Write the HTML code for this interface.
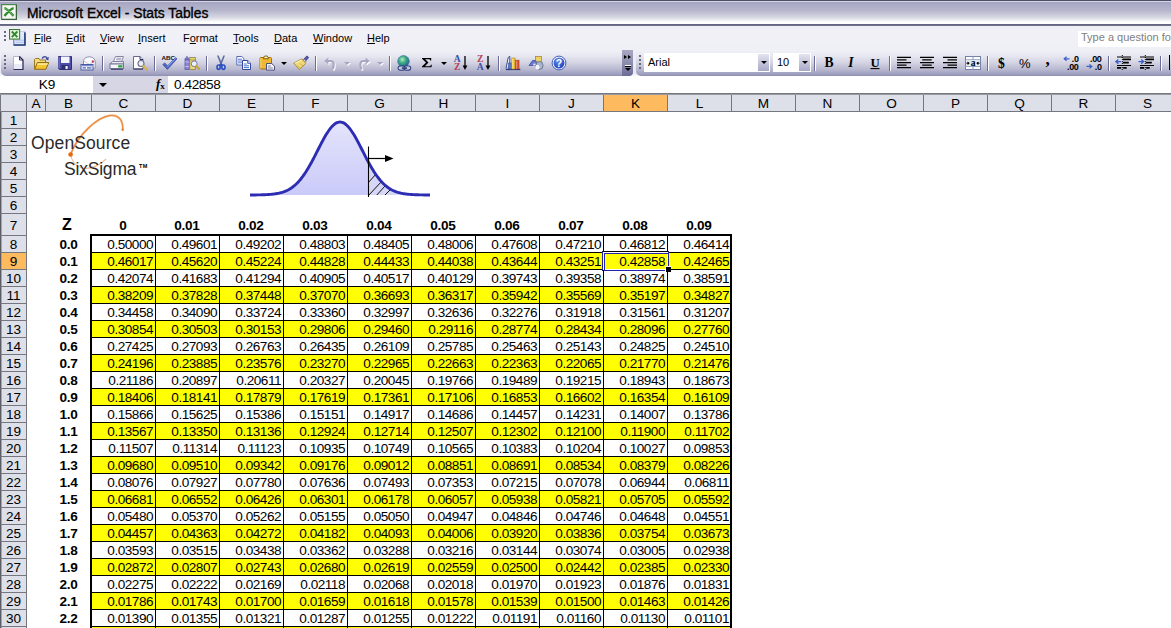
<!DOCTYPE html><html><head><meta charset="utf-8"><title>Microsoft Excel - Stats Tables</title><style>*{box-sizing:border-box;margin:0;padding:0}
html,body{width:1171px;height:628px;overflow:hidden;background:#fff;font-family:"Liberation Sans",sans-serif;font-size:13px;color:#000}
body{position:relative}
div{position:absolute}
#title{left:0;top:0;width:1171px;height:26px;background:linear-gradient(#4e4e68 0,#4e4e68 1px,#d4d4e4 1px,#d4d4e4 2px,#a6a6c2 2.5px,#aeaec8 6px,#b4b4cc 10px,#c6c6d8 14px,#dcdce6 18px,#f4f4f7 21px,#ffffff 22px,#ffffff 24px,#8a8aa4 24px,#5e5e7a 24.6px,#62627e 25.4px,#b8b8cc 26px)}
#title .txt{left:27px;top:4px;font-size:13.85px;line-height:18px;white-space:nowrap;color:#000;-webkit-text-stroke:0.35px #000}
#menu{left:0;top:26px;width:1171px;height:24px;background:linear-gradient(#ededf4,#f1f1f7 25%,#efeff6)}
#menu span{position:absolute;top:5px;font-size:11px;line-height:15px;white-space:nowrap}
#menu u{text-decoration:underline;text-underline-offset:1px}
#tb1{left:1px;top:50px;width:632px;height:26px;background:linear-gradient(#f1f1f7,#e6e6f0 25%,#d2d2e2 50%,#b8b8d0 75%,#a0a0c0 92%,#8e8eb2);border-radius:0 0 5px 5px}
#tb2{left:636px;top:50px;width:540px;height:26px;background:linear-gradient(#f1f1f7,#e6e6f0 25%,#d2d2e2 50%,#b8b8d0 75%,#a0a0c0 92%,#8e8eb2);border-radius:0 0 0 5px}
#tbgap{left:0;top:50px;width:1171px;height:27px;background:linear-gradient(#efeff6,#e8e8f1 85%,#fff)}
#fbar{left:0;top:76px;width:1171px;height:17px;background:#fff}
#fbar .mid{left:93px;top:0;width:75px;height:17px;background:#d6d6e4}
#fbar .nb{left:0;top:0;width:93px;height:17px;text-align:center;font-size:13.6px;line-height:17px;padding-left:1px}
#fbar .val{left:174px;top:0;font-size:13.6px;line-height:17px;letter-spacing:-0.4px}
#colhdr{left:0;top:93px;width:1171px;height:19px;background:#dddfe9;border-top:1px solid #76767e;border-bottom:1px solid #76767e}
#colhdr .ch{top:0;height:17px;border-right:1px solid #76767e;text-align:center;font-size:13.6px;line-height:20px}
#colhdr .corner{left:0;top:0;width:27px;height:17px;border-right:1px solid #76767e;border-left:1px solid #76767e}
#colhdr .sel{background:#fdba5e}
#rowhdr{left:0;top:0;width:27px;height:628px}
#rowhdr .rh{left:0;width:27px;background:#dddfe9;border-right:1px solid #76767e;border-bottom:1px solid #76767e;border-left:1px solid #5c5c64;text-align:center;font-size:13.6px;overflow:hidden;padding-left:0;box-shadow:inset 1px 0 0 #a4a4ac}
#rowhdr .sel{background:#fdba5e}
#sheet{left:0;top:0;width:1171px;height:628px;pointer-events:none}
.zh{text-align:center;font-weight:bold;font-size:16px;line-height:24px;padding-right:2px}
.hh{text-align:center;font-weight:bold;font-size:13.6px;line-height:26px;letter-spacing:-0.3px}
.zl{text-align:center;font-weight:bold;font-size:13.6px;line-height:20px;height:17px;letter-spacing:-0.3px;padding-left:1px}
.v{width:64px;height:17px;text-align:right;padding-right:2px;font-size:13.6px;line-height:19px;letter-spacing:-0.5px}
.yrow{left:92px;width:638px;height:16px;background:#ffff00}
.hl{left:92px;width:638px;height:1px;background:#000}
.vl{top:236px;width:1px;height:392px;background:#000;margin-left:0}
.tb-top{left:90px;top:234px;width:642px;height:2px;background:#000}
.tb-left{left:90px;top:234px;width:2px;height:394px;background:#000}
.tb-right{left:730px;top:234px;width:2px;height:394px;background:#000}

.grip3{left:4px;top:5px;width:2px;height:10px;background:repeating-linear-gradient(#686880 0,#686880 2px,transparent 2px,transparent 4px)}
.grip4{left:3px;top:5px;width:2px;height:14px;background:repeating-linear-gradient(#686880 0,#686880 2px,transparent 2px,transparent 4px)}
.grip4:after,.grip3:after{content:"";position:absolute;left:1px;top:1px;width:2px;height:100%;background:repeating-linear-gradient(#fff 0,#fff 2px,transparent 2px,transparent 4px);z-index:-1}
.sep{top:6px;width:2px;height:15px;border-left:1px solid #6c6c98;background:#fff}
.arr{top:12px;width:0;height:0;border-left:3px solid transparent;border-right:3px solid transparent;border-top:3px solid #000}
.ovf{left:621px;top:0;width:11px;height:25px;background:linear-gradient(#a8a8c2,#8c8cae 50%,#6c6c98);border-radius:0 0 4px 0;height:26px}
.ask{left:1078px;top:5px;width:100px;height:16px;background:#fff;color:#808080;font-size:11px;line-height:13px;padding-left:3px;white-space:nowrap;overflow:hidden}
.combo{top:3px;height:19px;background:#fff;border:1px solid #fff}
.combo span{position:absolute;left:3px;top:1px;font-size:11px;line-height:15px}
.combo b{position:absolute;right:0;top:0;width:11px;height:17px;background:linear-gradient(#e4e4f0,#a8a8c8)}
.combo b:after{content:"";position:absolute;left:3px;top:7px;border-left:3px solid transparent;border-right:3px solid transparent;border-top:3px solid #000}
#fbar .dd{position:absolute;left:6px;top:7px;border-left:4px solid transparent;border-right:4px solid transparent;border-top:4px solid #000}
#fbar .fx{position:absolute;left:63px;top:0;font-family:"Liberation Serif",serif;font-size:13px;line-height:16px;font-weight:bold;font-style:italic}
#fbar .fx small{font-size:9px;font-style:normal;position:relative;top:1px;left:0}

.lg{font-size:17.5px;line-height:22px;white-space:nowrap;color:#2a2a2a;letter-spacing:-0.2px}
.tm{font-size:5.5px;font-weight:bold;line-height:8px;letter-spacing:.3px}

.selbox{left:602px;top:251px;width:67px;height:20px;border:1px solid;border-color:#000 #2424a8 #000 #2424a8}
.selbox .s1{left:0;top:0;width:65px;height:18px;border:1px solid #fff}
.selbox .s1:after{content:"";position:absolute;left:0;top:0;width:63px;height:16px;border:1px solid #2424a8}
.selh{left:665px;top:266px;width:6px;height:6px;background:#000;border-left:1px solid #fff;border-top:1px solid #fff}

.ovf i{position:absolute;display:block}
.ovf .c1{left:2px;top:5px;border-top:2.5px solid transparent;border-bottom:2.5px solid transparent;border-left:3px solid #000}
.ovf .c2{left:6px;top:5px;border-top:2.5px solid transparent;border-bottom:2.5px solid transparent;border-left:3px solid #000}
.ovf .ln{left:3px;top:15px;width:6px;height:2px;background:#000;border-top:1px solid #fff;box-sizing:content-box;height:1px}
.ovf .tri{left:3px;top:18px;border-left:3px solid transparent;border-right:3px solid transparent;border-top:3.5px solid #000}
.arr.g{border-top-color:#a4a4c0;filter:drop-shadow(1px 1px 0 #fff)}
#colhdr:before{content:"";position:absolute;left:0;top:0;width:1171px;height:1px;background:#9a9aa2;z-index:3}
</style></head><body>
<div id="title"><svg style="position:absolute;left:1px;top:4px" width="16" height="16" viewBox="0 0 16 16"><rect x=".6" y=".6" width="14.8" height="14.8" fill="#f4f8f0" stroke="#4a8a4a" stroke-width="1.2"/><path d="M15.4 1v14.4H1" fill="none" stroke="#3a5a3a" stroke-width="1"/><path d="M3.4 4.2c3 .5 6 4.500 9.200 7.600M12.600 4.200c-3 .5-6 4.500-9.200 7.600" stroke="#2f8a2f" stroke-width="2.300" fill="none"/><path d="M3.400 4.200c3 .5 6 4.500 9.200 7.600" stroke="#8cc88c" stroke-width=".7" fill="none"/></svg><div class="txt">Microsoft Excel - Stats Tables</div></div>
<div id="menu"><div class="grip3"></div><svg style="position:absolute;left:9px;top:3px" width="17" height="17" viewBox="0 0 16 16"><path d="M6 3h9v12H4.500V9" fill="#dfe8fa" stroke="#5a78c0" stroke-width="1"/><path d="M6 10.500h8M6 12.500h8" stroke="#a8bce8" stroke-width=".9"/><path d="M10 3.500h4" stroke="#fff" stroke-width="1"/><path d="M15 3.500V15H4.500" fill="none" stroke="#28407c" stroke-width="1.500"/><rect x=".5" y=".5" width="9.500" height="9" fill="#e8f2e0" stroke="#3a7a3a" stroke-width="1"/><path d="M2.600 2.400l5.300 5.200M7.900 2.400L2.600 7.600" stroke="#2f8a2f" stroke-width="1.800"/></svg>
<span style="left:34px"><u>F</u>ile</span><span style="left:66px"><u>E</u>dit</span><span style="left:100px"><u>V</u>iew</span><span style="left:138px"><u>I</u>nsert</span><span style="left:183px">F<u>o</u>rmat</span><span style="left:233px"><u>T</u>ools</span><span style="left:274px"><u>D</u>ata</span><span style="left:313px"><u>W</u>indow</span><span style="left:367px"><u>H</u>elp</span>
<div class="ask">Type a question for help</div></div>
<div id="tbgap"></div>
<div id="tb1"><div class="grip4"></div><svg style="position:absolute;left:9px;top:5px" width="16" height="16" viewBox="0 0 16 16"><path d="M3.5 1.5h6l3.5 3.5v9.5h-9.5z" fill="#fff" stroke="#b4b4cc" stroke-width="1"/><path d="M4 9h8.5v5h-8.5z" fill="#dcdcf0" opacity=".6"/><path d="M9.5 1.5v3.5h3.5" fill="#e8e8f4" stroke="#30305a" stroke-width="1"/><path d="M9.5 1.5l3.5 3.5v9.5H3.5" fill="none" stroke="#2a2a58" stroke-width="1.2"/></svg><svg style="position:absolute;left:32px;top:5px" width="16" height="16" viewBox="0 0 16 16"><path d="M9.2 3.6c1.2-2.6 4.4-2.6 5.2.2" fill="none" stroke="#3a4a90" stroke-width="1.4"/><path d="M15.8 1.8l-.5 3.6-3-1.4z" fill="#3a4a90"/><path d="M1.5 14V4.5l1-1h3.5l1 1.5h5.5v2.5" fill="#f6dc78" stroke="#9c7a20" stroke-width="1"/><path d="M1.6 14.3l2.8-6.8h11.4l-3 6.8z" fill="#f2c430" stroke="#8c6a18" stroke-width="1"/><path d="M4.8 8.3h10l-.6 1.6H4.2z" fill="#fbe690"/></svg><svg style="position:absolute;left:56px;top:5px" width="16" height="16" viewBox="0 0 16 16"><path d="M1.5 1.5h13v13h-12l-1-1z" fill="#4a4aa8" stroke="#30307a" stroke-width="1"/><rect x="4" y="1.5" width="8.5" height="6.5" fill="#f4f4fc"/><rect x="4.5" y="10" width="7" height="4.5" fill="#30306a"/><rect x="8.5" y="11" width="2.2" height="3" fill="#f0f0f8"/><path d="M2 2v11" stroke="#8a8ad8" stroke-width="1"/></svg><svg style="position:absolute;left:79px;top:5px" width="16" height="16" viewBox="0 0 16 16"><path d="M3.5 9V5.8C4.8 .6 13.5 .4 15.2 5.8v7.4H11" fill="#fbfbfe" stroke="#9090b0" stroke-width="1"/><path d="M4 6.2l5.5 3.2 5.4-3.4" fill="none" stroke="#c0c0d4" stroke-width=".8"/><rect x="11.8" y="5.4" width="2" height="2.2" fill="#c03048"/><rect x="1" y="9.5" width="12" height="5.5" fill="#fff" stroke="#4a5aa0" stroke-width="1"/><rect x="1.5" y="10" width="11" height="1.3" fill="#7a88cc"/><path d="M2.5 12.5h3.4M2.5 13.8h3.4M7 12.5h4.5M7 13.8h4.5" stroke="#6a7ac0" stroke-width=".9"/></svg><svg style="position:absolute;left:108px;top:5px" width="16" height="16" viewBox="0 0 16 16"><path d="M4.5 6.5L6.5 1.5h8l-2 5z" fill="#fff" stroke="#8888a4" stroke-width="1"/><path d="M7.5 3.2h5M7 4.8h5" stroke="#8a8aa8" stroke-width=".9"/><path d="M1 9l2.5-2.5h11L14.5 9z" fill="#ececf4" stroke="#8080a0" stroke-width="1"/><rect x="1" y="9" width="13.5" height="4.5" fill="#f6f6fa" stroke="#74749a" stroke-width="1"/><rect x="9.2" y="10.2" width="4.3" height="2.3" fill="#2f9e44"/><path d="M2 14.4h12" stroke="#50507a" stroke-width="1.2"/></svg><svg style="position:absolute;left:131px;top:5px" width="16" height="16" viewBox="0 0 16 16"><path d="M1.5 1.5h6.5l3 3v9.5h-9.5z" fill="#fff" stroke="#6a6a90" stroke-width="1"/><path d="M8 1.5v3h3" fill="#e4e4f0" stroke="#30305a" stroke-width="1"/><path d="M1.5 14h9.5" stroke="#2a2a58" stroke-width="1"/><circle cx="9" cy="8.5" r="3" fill="#e8f0fa" stroke="#6a6a88" stroke-width="1.1"/><path d="M11.3 10.8l3.5 3.7" stroke="#c9a540" stroke-width="2.2" stroke-linecap="round"/><path d="M11.3 10.8l3.5 3.7" stroke="#f0d878" stroke-width=".8" stroke-linecap="round"/></svg><svg style="position:absolute;left:160px;top:5px" width="16" height="16" viewBox="0 0 16 16"><text x="7.2" y="4.6" font-family="Liberation Sans" font-weight="bold" font-size="6.2" text-anchor="middle" fill="#101020" textLength="13.6" lengthAdjust="spacingAndGlyphs">ABC</text><path d="M1.8 9.6l1.9-1.7 2.8 3L14.6 2.6l1.4 1.2L6.4 14.4z" fill="#4a68c8" stroke="#2a3a90" stroke-width=".6"/><path d="M6.5 11.8L14.6 3.4" stroke="#9ab0f0" stroke-width=".8"/></svg><svg style="position:absolute;left:183px;top:5px" width="16" height="16" viewBox="0 0 16 16"><rect x="1" y="4" width="4.2" height="10.5" fill="#8a86d8" stroke="#5a58a8" stroke-width=".8"/><path d="M1.2 4L3 1.2 5 4z" fill="#8a86d8" stroke="#5a58a8" stroke-width=".6"/><path d="M1.2 7h3.8M1.2 11.5h3.8" stroke="#c8c4f4" stroke-width=".9"/><rect x="5.8" y="2.5" width="5.5" height="12" fill="#ecdc78" stroke="#8c8040" stroke-width=".8"/><path d="M6 5h5" stroke="#a89838" stroke-width="1"/><circle cx="10.2" cy="8.8" r="2.9" fill="#eef2fc" stroke="#7878a0" stroke-width="1"/><path d="M12.4 11l2.8 3" stroke="#c9a540" stroke-width="2.2" stroke-linecap="round"/></svg><svg style="position:absolute;left:212px;top:5px" width="16" height="16" viewBox="0 0 16 16"><path d="M5 1l3.5 8.6M11 1L7.5 9.6" stroke="#5a6a9a" stroke-width="1.5" fill="none" stroke-linecap="round"/><ellipse cx="5.6" cy="12.2" rx="1.6" ry="2.2" fill="none" stroke="#2a50c0" stroke-width="1.6"/><ellipse cx="10.4" cy="12.2" rx="1.6" ry="2.2" fill="none" stroke="#2a50c0" stroke-width="1.6"/><path d="M6.6 10.4L8 9l1.4 1.4" stroke="#2a50c0" stroke-width="1.4" fill="none"/></svg><svg style="position:absolute;left:235px;top:5px" width="16" height="16" viewBox="0 0 16 16"><path d="M.8 1.5h5l2.2 2.2v6.3h-7.2z" fill="#fff" stroke="#5868b0" stroke-width="1"/><path d="M2 4.2h4M2 6h4.5M2 7.8h4.5" stroke="#5878d0" stroke-width="1"/><path d="M6.5 5.5h5.2l2.8 2.8v6.2h-8z" fill="#fff" stroke="#3048a0" stroke-width="1"/><path d="M11.7 5.5v2.8h2.8" fill="#dfe4f8" stroke="#3048a0" stroke-width=".9"/><path d="M7.8 9h3M7.8 10.8h5.2M7.8 12.6h5.2" stroke="#4a70d0" stroke-width="1"/></svg><svg style="position:absolute;left:258px;top:5px" width="16" height="16" viewBox="0 0 16 16"><rect x="1" y="2.5" width="11.5" height="11.5" rx="1" fill="#efb830" stroke="#9c7418" stroke-width="1"/><path d="M1.8 3.2v10" stroke="#f8dc80" stroke-width="1"/><path d="M4.5 3.8V2.2l1.2-1.2h2.4l1.2 1.2v1.6z" fill="#e8c050" stroke="#7a5a10" stroke-width=".9"/><rect x="6.2" y="1.8" width="1.6" height="1.2" fill="#fff"/><path d="M7.5 8.5h5.2l2.8 2.6v4h-8z" fill="#f4f4fa" stroke="#50507c" stroke-width="1"/><path d="M8.8 11h3M8.8 13h5" stroke="#8080a8" stroke-width="1"/></svg><svg style="position:absolute;left:292px;top:5px" width="16" height="16" viewBox="0 0 16 16"><path d="M10.5 4.5l3.4-3.6 1.8 1.6-3.3 3.7z" fill="#5a58a8" stroke="#38367c" stroke-width=".8"/><path d="M9.7 5.2l1.3-1.2 2.2 2-1.3 1.3z" fill="#d8d8e8" stroke="#70708c" stroke-width=".7"/><path d="M.8 8.2L8.8 3.8l4 4.5-6.6 6.2z" fill="#f0d878" stroke="#a08830" stroke-width=".9"/><path d="M2.2 8.3l6.3-3.4" stroke="#fbf0b8" stroke-width="1.1"/><path d="M4 10.5l4 3M6.5 8.5l4 2.5" stroke="#c8a840" stroke-width=".7"/></svg><svg style="position:absolute;left:321px;top:5px" width="16" height="16" viewBox="0 0 16 16"><g transform="translate(1 1)"><path d="M5 6h3.6c3.6 0 4 4.4 1.8 8.4" fill="none" stroke="#fff" stroke-width="2.1"/><path d="M2.2 6L6.4 2.4v7.2z" fill="#fff"/></g><path d="M5 6h3.6c3.6 0 4 4.4 1.8 8.4" fill="none" stroke="#a8a8c4" stroke-width="2.1"/><path d="M2.2 6L6.4 2.4v7.2z" fill="#a8a8c4"/></svg><svg style="position:absolute;left:355px;top:5px" width="16" height="16" viewBox="0 0 16 16"><g transform="translate(1 1)"><path d="M11 6H7.4c-3.6 0-4 4.4-1.8 8.4" fill="none" stroke="#fff" stroke-width="2.1"/><path d="M13.8 6L9.6 2.4v7.2z" fill="#fff"/></g><path d="M11 6H7.4c-3.6 0-4 4.4-1.8 8.4" fill="none" stroke="#a8a8c4" stroke-width="2.1"/><path d="M13.8 6L9.6 2.4v7.2z" fill="#a8a8c4"/></svg><svg style="position:absolute;left:395px;top:5px" width="16" height="16" viewBox="0 0 16 16"><defs><radialGradient id="gl" cx=".4" cy=".35" r=".7"><stop offset="0" stop-color="#b0ecc0"/><stop offset=".45" stop-color="#3aa880"/><stop offset="1" stop-color="#2850a0"/></radialGradient></defs><circle cx="7.5" cy="6.3" r="5.8" fill="url(#gl)" stroke="#3a78a0" stroke-width=".6"/><rect x="2.2" y="11.2" width="6.6" height="3.8" rx="1.9" fill="none" stroke="#2a3a78" stroke-width="1.3"/><rect x="8" y="11.2" width="6.6" height="3.8" rx="1.9" fill="none" stroke="#2a3a78" stroke-width="1.3"/><rect x="2.9" y="11.9" width="5.2" height="2.4" rx="1.2" fill="none" stroke="#c8d8f8" stroke-width=".7"/><rect x="8.7" y="11.9" width="5.2" height="2.4" rx="1.2" fill="none" stroke="#c8d8f8" stroke-width=".7"/><path d="M6 13.1h5" stroke="#1a2458" stroke-width="1.3"/></svg><svg style="position:absolute;left:418px;top:5px" width="16" height="16" viewBox="0 0 16 16"><path transform="translate(0 .6) scale(1 .84)" d="M3 3h9.2v2.8h-1c-.2-1.1-.6-1.5-1.6-1.5H6.2l3.3 4-3.6 4.4h4c1.2 0 1.7-.5 2-1.8h1L12.4 14H3v-.9L7 8.2 3 3.8z" fill="#000"/></svg><svg style="position:absolute;left:452px;top:5px" width="16" height="16" viewBox="0 0 16 16"><text x="4.2" y="7.4" font-family="Liberation Serif" font-weight="bold" font-size="9.6" text-anchor="middle" fill="#3a50a8">A</text><text x="4.2" y="15.2" font-family="Liberation Serif" font-weight="bold" font-size="9.6" text-anchor="middle" fill="#b84050">Z</text><path d="M12 1v12" stroke="#000" stroke-width="1.3"/><path d="M9.6 10.6L12 15l2.4-4.4z" fill="#000"/></svg><svg style="position:absolute;left:475px;top:5px" width="16" height="16" viewBox="0 0 16 16"><text x="4.2" y="7.4" font-family="Liberation Serif" font-weight="bold" font-size="9.6" text-anchor="middle" fill="#b84050">Z</text><text x="4.2" y="15.2" font-family="Liberation Serif" font-weight="bold" font-size="9.6" text-anchor="middle" fill="#3a50a8">A</text><path d="M12 1v12" stroke="#000" stroke-width="1.3"/><path d="M9.6 10.6L12 15l2.4-4.4z" fill="#000"/></svg><svg style="position:absolute;left:504px;top:5px" width="16" height="16" viewBox="0 0 16 16"><path d="M1 13.5L3.2 2.5l1.6-1.2v8" fill="#f4f4fc" stroke="#3a4a90" stroke-width="1"/><path d="M.8 14.5h14.5" stroke="#2a3a80" stroke-width="1.3"/><rect x="3.6" y="8" width="3" height="6" fill="#5a78c0" stroke="#34508c" stroke-width=".6"/><rect x="6.8" y="3" width="3.2" height="11" fill="#f0c038" stroke="#b08818" stroke-width=".6"/><rect x="7.3" y="3.5" width="1" height="10" fill="#fbe690"/><rect x="10.6" y="5.2" width="3.4" height="8.8" fill="#d85838" stroke="#a03820" stroke-width=".6"/><rect x="11.1" y="5.7" width="1" height="8" fill="#f09070"/></svg><svg style="position:absolute;left:527px;top:5px" width="16" height="16" viewBox="0 0 16 16"><rect x="7.5" y="1.5" width="6" height="5.5" fill="#ecd068" stroke="#a88c30" stroke-width=".8"/><path d="M1 10.5L4.5 5.5h3.2l2 5z" fill="#6878d0" stroke="#4050a8" stroke-width=".8"/><path d="M4.8 10.5l.8-2h1.8l.8 2z" fill="#e0e0f0"/><ellipse cx="11.5" cy="10.5" rx="3.6" ry="4" fill="#a8b4cc" stroke="#60708c" stroke-width=".8"/><ellipse cx="9.5" cy="12.2" rx="2" ry="2.4" fill="#f4f4fa"/></svg><svg style="position:absolute;left:550px;top:5px" width="16" height="16" viewBox="0 0 16 16"><defs><radialGradient id="gh" cx=".4" cy=".3" r=".8"><stop offset="0" stop-color="#6890f0"/><stop offset="1" stop-color="#1838b0"/></radialGradient></defs><circle cx="8" cy="8" r="6.9" fill="#fff" stroke="#2848b8" stroke-width=".9"/><circle cx="8" cy="8" r="5.5" fill="url(#gh)"/><text x="8" y="12" font-family="Liberation Sans" font-weight="bold" font-size="10.5" text-anchor="middle" fill="#fff">?</text></svg><div class="sep" style="left:101px"></div><div class="sep" style="left:153px"></div><div class="sep" style="left:205px"></div><div class="sep" style="left:314px"></div><div class="sep" style="left:388px"></div><div class="sep" style="left:497px"></div><div class="arr" style="left:279.5px"></div><div class="arr g" style="left:342.5px"></div><div class="arr g" style="left:376px"></div><div class="arr" style="left:439.5px"></div><div class="ovf"><i class="c1"></i><i class="c2"></i><i class="ln"></i><i class="tri"></i></div></div>
<div id="tb2"><div class="grip4" style="left:3px"></div><div class="combo" style="left:8px;width:126px"><span>Arial</span><b></b></div><div class="combo" style="left:137px;width:38px"><span>10</span><b></b></div><svg style="position:absolute;left:184.5px;top:5px" width="16" height="16" viewBox="0 0 16 16"><text x="8" y="12.4" font-family="Liberation Serif" font-weight="bold" font-size="13.6" text-anchor="middle" fill="#000">B</text></svg><svg style="position:absolute;left:207px;top:5px" width="16" height="16" viewBox="0 0 16 16"><text x="8" y="12.4" font-family="Liberation Serif" font-weight="bold" font-style="italic" font-size="13.6" text-anchor="middle" fill="#000">I</text></svg><svg style="position:absolute;left:230.5px;top:5px" width="16" height="16" viewBox="0 0 16 16"><text x="8" y="11.6" font-family="Liberation Serif" font-weight="bold" font-size="12.8" text-anchor="middle" fill="#000">U</text><path d="M3.5 13.6h9" stroke="#000" stroke-width="1.1"/></svg><svg style="position:absolute;left:260px;top:5px" width="16" height="16" viewBox="0 0 16 16"><path d="M1 2.4h14M1 4.95h9.5M1 7.5h14M1 10.05h9.5M1 12.6h14" stroke="#000" stroke-width="1.25"/></svg><svg style="position:absolute;left:283px;top:5px" width="16" height="16" viewBox="0 0 16 16"><path d="M1 2.4h14M3.2 4.95h9.5M1 7.5h14M3.2 10.05h9.5M1 12.6h14" stroke="#000" stroke-width="1.25"/></svg><svg style="position:absolute;left:306px;top:5px" width="16" height="16" viewBox="0 0 16 16"><path d="M1 2.4h14M5.5 4.95h9.5M1 7.5h14M5.5 10.05h9.5M1 12.6h14" stroke="#000" stroke-width="1.25"/></svg><svg style="position:absolute;left:329px;top:5px" width="16" height="16" viewBox="0 0 16 16"><rect x=".5" y="1.500" width="15" height="13" fill="#fff" stroke="#7484a8" stroke-width="1"/><path d="M.500 4.800h15M.500 11.400h15M8 1.500v3.300M8 11.400v3.100" stroke="#8a9abc" stroke-width="1"/><rect x="1" y="5.300" width="14" height="5.600" fill="#e4ecf4"/><text x="8" y="10.600" font-family="Liberation Serif" font-weight="bold" font-size="9.500" text-anchor="middle" fill="#000">a</text><path d="M1.200 8.200h2.600M2.800 7l1.500 1.200-1.500 1.200zM14.800 8.200h-2.600M13.200 7l-1.500 1.200 1.500 1.200z" stroke="#000" stroke-width=".7" fill="#000"/></svg><svg style="position:absolute;left:357.5px;top:5px" width="16" height="16" viewBox="0 0 16 16"><text x="7.5" y="12.6" font-family="Liberation Serif" font-weight="bold" font-size="13.6" text-anchor="middle" fill="#000">$</text></svg><svg style="position:absolute;left:380.5px;top:5px" width="16" height="16" viewBox="0 0 16 16"><text x="7.8" y="12.6" font-family="Liberation Sans" font-size="13" text-anchor="middle" fill="#000">%</text></svg><svg style="position:absolute;left:404px;top:5px" width="16" height="16" viewBox="0 0 16 16"><text x="7.6" y="10" font-family="Liberation Serif" font-weight="bold" font-size="17" text-anchor="middle" fill="#000">,</text></svg><svg style="position:absolute;left:427px;top:5px" width="16" height="16" viewBox="0 0 16 16"><text x="15.6" y="7" font-family="Liberation Sans" font-weight="bold" font-size="9" text-anchor="end" fill="#000" letter-spacing="-.3">.0</text><text x="15.6" y="14.6" font-family="Liberation Sans" font-weight="bold" font-size="9" text-anchor="end" fill="#000" letter-spacing="-.3">.00</text><path d="M6.5 3.8H1.5M3.6 1.8L1.2 3.8l2.4 2" stroke="#3a60c8" stroke-width="1.2" fill="none"/></svg><svg style="position:absolute;left:450px;top:5px" width="16" height="16" viewBox="0 0 16 16"><text x="15.6" y="7" font-family="Liberation Sans" font-weight="bold" font-size="9" text-anchor="end" fill="#000" letter-spacing="-.3">.00</text><text x="15.6" y="14.6" font-family="Liberation Sans" font-weight="bold" font-size="9" text-anchor="end" fill="#000" letter-spacing="-.3">.0</text><path d="M.5 11.4h5M3.4 9.4l2.4 2-2.4 2" stroke="#3a60c8" stroke-width="1.2" fill="none"/></svg><svg style="position:absolute;left:479px;top:5px" width="16" height="16" viewBox="0 0 16 16"><path d="M2 2h14M2 10.500h14" stroke="#000" stroke-width="1.100"/><path d="M7.800 4.400h8.200M7.800 7.700h6M2 12.900h4.200M8.200 12.900h3.500" stroke="#000" stroke-width="1.700"/><path d="M7.300 0v15" stroke="#000" stroke-width="1" stroke-dasharray="1 1"/><path d="M6 6.600H1.200M3.400 4.400L1 6.600l2.400 2.200" stroke="#3a60c8" stroke-width="1.400" fill="none"/></svg><svg style="position:absolute;left:502px;top:5px" width="16" height="16" viewBox="0 0 16 16"><path d="M2 2h14M2 10.500h14" stroke="#000" stroke-width="1.100"/><path d="M7.800 4.400h8.200M7.800 7.700h6M2 12.900h4.200M8.200 12.900h3.500" stroke="#000" stroke-width="1.700"/><path d="M7.300 0v15" stroke="#000" stroke-width="1" stroke-dasharray="1 1"/><path d="M.500 6.600h5M3.200 4.400l2.400 2.200-2.400 2.200" stroke="#3a60c8" stroke-width="1.400" fill="none"/></svg><div class="sep" style="left:178px"></div><div class="sep" style="left:253px"></div><div class="sep" style="left:351px"></div><div class="sep" style="left:472px"></div><div class="sep" style="left:524px"></div><div style="left:533px;top:5px;width:2px;height:15px;border-left:1px solid #000"></div></div>
<div id="fbar"><div class="nb">K9</div><div class="mid"><i class="dd"></i><span class="fx"><i>f</i><small>x</small></span></div><div class="val">0.42858</div></div>
<div id="colhdr">
<div class="corner"></div>
<div class="ch" style="left:27px;width:19px">A</div>
<div class="ch" style="left:46px;width:46px">B</div>
<div class="ch" style="left:92px;width:64px">C</div>
<div class="ch" style="left:156px;width:64px">D</div>
<div class="ch" style="left:220px;width:64px">E</div>
<div class="ch" style="left:284px;width:64px">F</div>
<div class="ch" style="left:348px;width:64px">G</div>
<div class="ch" style="left:412px;width:64px">H</div>
<div class="ch" style="left:476px;width:64px">I</div>
<div class="ch" style="left:540px;width:64px">J</div>
<div class="ch sel" style="left:604px;width:64px">K</div>
<div class="ch" style="left:668px;width:64px">L</div>
<div class="ch" style="left:732px;width:64px">M</div>
<div class="ch" style="left:796px;width:64px">N</div>
<div class="ch" style="left:860px;width:64px">O</div>
<div class="ch" style="left:924px;width:64px">P</div>
<div class="ch" style="left:988px;width:64px">Q</div>
<div class="ch" style="left:1052px;width:64px">R</div>
<div class="ch" style="left:1116px;width:64px">S</div>
</div>
<div id="rowhdr">
<div class="rh" style="top:112px;height:17px;line-height:18px">1</div>
<div class="rh" style="top:129px;height:17px;line-height:18px">2</div>
<div class="rh" style="top:146px;height:17px;line-height:18px">3</div>
<div class="rh" style="top:163px;height:17px;line-height:18px">4</div>
<div class="rh" style="top:180px;height:17px;line-height:18px">5</div>
<div class="rh" style="top:197px;height:17px;line-height:18px">6</div>
<div class="rh" style="top:214px;height:22px;line-height:24px">7</div>
<div class="rh" style="top:236px;height:17px;line-height:18px">8</div>
<div class="rh sel" style="top:253px;height:17px;line-height:18px">9</div>
<div class="rh" style="top:270px;height:17px;line-height:18px">10</div>
<div class="rh" style="top:287px;height:17px;line-height:18px">11</div>
<div class="rh" style="top:304px;height:17px;line-height:18px">12</div>
<div class="rh" style="top:321px;height:17px;line-height:18px">13</div>
<div class="rh" style="top:338px;height:17px;line-height:18px">14</div>
<div class="rh" style="top:355px;height:17px;line-height:18px">15</div>
<div class="rh" style="top:372px;height:17px;line-height:18px">16</div>
<div class="rh" style="top:389px;height:17px;line-height:18px">17</div>
<div class="rh" style="top:406px;height:17px;line-height:18px">18</div>
<div class="rh" style="top:423px;height:17px;line-height:18px">19</div>
<div class="rh" style="top:440px;height:17px;line-height:18px">20</div>
<div class="rh" style="top:457px;height:17px;line-height:18px">21</div>
<div class="rh" style="top:474px;height:17px;line-height:18px">22</div>
<div class="rh" style="top:491px;height:17px;line-height:18px">23</div>
<div class="rh" style="top:508px;height:17px;line-height:18px">24</div>
<div class="rh" style="top:525px;height:17px;line-height:18px">25</div>
<div class="rh" style="top:542px;height:17px;line-height:18px">26</div>
<div class="rh" style="top:559px;height:17px;line-height:18px">27</div>
<div class="rh" style="top:576px;height:17px;line-height:18px">28</div>
<div class="rh" style="top:593px;height:17px;line-height:18px">29</div>
<div class="rh" style="top:610px;height:17px;line-height:18px">30</div>
<div class="rh" style="top:627px;height:17px;line-height:18px">31</div>
<div class="rh" style="top:644px;height:17px;line-height:18px">32</div>
</div>
<div id="sheet">
<svg style="position:absolute;left:0;top:0" width="1171" height="628" viewBox="0 0 1171 628">
<defs><linearGradient id="bg" x1="0" y1="0" x2="0" y2="1"><stop offset="0" stop-color="#e4e4fc"/><stop offset="1" stop-color="#cacaf9"/></linearGradient>
<pattern id="hat" width="8" height="8" patternUnits="userSpaceOnUse" patternTransform="rotate(-45 368 195)"><rect width="8" height="8" fill="#d4d4f4"/><path d="M0 4h8" stroke="#222" stroke-width=".8"/></pattern>
<clipPath id="tc"><path d="M368.0 161.35 L369.0 163.19 L370.0 164.99 L371.0 166.74 L372.0 168.45 L373.0 170.10 L374.0 171.69 L375.0 173.23 L376.0 174.70 L377.0 176.12 L378.0 177.46 L379.0 178.75 L380.0 179.97 L381.0 181.12 L382.0 182.22 L383.0 183.24 L384.0 184.21 L385.0 185.12 L386.0 185.97 L387.0 186.76 L388.0 187.50 L389.0 188.19 L390.0 188.82 L391.0 189.41 L392.0 189.95 L393.0 190.45 L394.0 190.90 L395.0 191.32 L396.0 191.70 L397.0 192.05 L398.0 192.37 L399.0 192.65 L400.0 192.91 L401.0 193.15 L402.0 193.36 L403.0 193.55 L404.0 193.72 L405.0 193.88 L406.0 194.01 L407.0 194.13 L408.0 194.24 L409.0 194.34 L410.0 194.42 L411.0 194.50 L412.0 194.56 L413.0 194.62 L414.0 194.67 L415.0 194.72 L416.0 194.76 L417.0 194.79 L418.0 194.82 L419.0 194.85 L420.0 194.87 L421.0 194.89 L422.0 194.90 L423.0 194.92 L424.0 194.93 L425.0 194.94 L426.0 194.95 L427.0 194.96 L428.0 194.97 L429.0 194.97 L430.0 194.98 L368 195 Z"/></clipPath></defs>
<path d="M250.0 194.98 L251.0 194.97 L252.0 194.97 L253.0 194.96 L254.0 194.95 L255.0 194.94 L256.0 194.93 L257.0 194.92 L258.0 194.90 L259.0 194.89 L260.0 194.87 L261.0 194.85 L262.0 194.82 L263.0 194.79 L264.0 194.76 L265.0 194.72 L266.0 194.67 L267.0 194.62 L268.0 194.56 L269.0 194.50 L270.0 194.42 L271.0 194.34 L272.0 194.24 L273.0 194.13 L274.0 194.01 L275.0 193.88 L276.0 193.72 L277.0 193.55 L278.0 193.36 L279.0 193.15 L280.0 192.91 L281.0 192.65 L282.0 192.37 L283.0 192.05 L284.0 191.70 L285.0 191.32 L286.0 190.90 L287.0 190.45 L288.0 189.95 L289.0 189.41 L290.0 188.82 L291.0 188.19 L292.0 187.50 L293.0 186.76 L294.0 185.97 L295.0 185.12 L296.0 184.21 L297.0 183.24 L298.0 182.22 L299.0 181.12 L300.0 179.97 L301.0 178.75 L302.0 177.46 L303.0 176.12 L304.0 174.70 L305.0 173.23 L306.0 171.69 L307.0 170.10 L308.0 168.45 L309.0 166.74 L310.0 164.99 L311.0 163.19 L312.0 161.35 L313.0 159.47 L314.0 157.56 L315.0 155.62 L316.0 153.67 L317.0 151.71 L318.0 149.74 L319.0 147.78 L320.0 145.82 L321.0 143.89 L322.0 141.99 L323.0 140.13 L324.0 138.31 L325.0 136.55 L326.0 134.85 L327.0 133.22 L328.0 131.68 L329.0 130.22 L330.0 128.87 L331.0 127.61 L332.0 126.47 L333.0 125.45 L334.0 124.55 L335.0 123.78 L336.0 123.14 L337.0 122.65 L338.0 122.29 L339.0 122.07 L340.0 122.00 L341.0 122.07 L342.0 122.29 L343.0 122.65 L344.0 123.14 L345.0 123.78 L346.0 124.55 L347.0 125.45 L348.0 126.47 L349.0 127.61 L350.0 128.87 L351.0 130.22 L352.0 131.68 L353.0 133.22 L354.0 134.85 L355.0 136.55 L356.0 138.31 L357.0 140.13 L358.0 141.99 L359.0 143.89 L360.0 145.82 L361.0 147.78 L362.0 149.74 L363.0 151.71 L364.0 153.67 L365.0 155.62 L366.0 157.56 L367.0 159.47 L368.0 161.35 L368.5 195 L250 195 Z" fill="url(#bg)"/>
<path d="M368.0 161.35 L369.0 163.19 L370.0 164.99 L371.0 166.74 L372.0 168.45 L373.0 170.10 L374.0 171.69 L375.0 173.23 L376.0 174.70 L377.0 176.12 L378.0 177.46 L379.0 178.75 L380.0 179.97 L381.0 181.12 L382.0 182.22 L383.0 183.24 L384.0 184.21 L385.0 185.12 L386.0 185.97 L387.0 186.76 L388.0 187.50 L389.0 188.19 L390.0 188.82 L391.0 189.41 L392.0 189.95 L393.0 190.45 L394.0 190.90 L395.0 191.32 L396.0 191.70 L397.0 192.05 L398.0 192.37 L399.0 192.65 L400.0 192.91 L401.0 193.15 L402.0 193.36 L403.0 193.55 L404.0 193.72 L405.0 193.88 L406.0 194.01 L407.0 194.13 L408.0 194.24 L409.0 194.34 L410.0 194.42 L411.0 194.50 L412.0 194.56 L413.0 194.62 L414.0 194.67 L415.0 194.72 L416.0 194.76 L417.0 194.79 L418.0 194.82 L419.0 194.85 L420.0 194.87 L421.0 194.89 L422.0 194.90 L423.0 194.92 L424.0 194.93 L425.0 194.94 L426.0 194.95 L427.0 194.96 L428.0 194.97 L429.0 194.97 L430.0 194.98 L368 195 Z" fill="#d6d6f6"/>
<g clip-path="url(#tc)" stroke="#111" stroke-width="1"><path d="M368 183l8-9M368 196l14-15M375 197l10-11M383 197l7-7"/></g>
<path d="M250.0 194.98 L251.0 194.97 L252.0 194.97 L253.0 194.96 L254.0 194.95 L255.0 194.94 L256.0 194.93 L257.0 194.92 L258.0 194.90 L259.0 194.89 L260.0 194.87 L261.0 194.85 L262.0 194.82 L263.0 194.79 L264.0 194.76 L265.0 194.72 L266.0 194.67 L267.0 194.62 L268.0 194.56 L269.0 194.50 L270.0 194.42 L271.0 194.34 L272.0 194.24 L273.0 194.13 L274.0 194.01 L275.0 193.88 L276.0 193.72 L277.0 193.55 L278.0 193.36 L279.0 193.15 L280.0 192.91 L281.0 192.65 L282.0 192.37 L283.0 192.05 L284.0 191.70 L285.0 191.32 L286.0 190.90 L287.0 190.45 L288.0 189.95 L289.0 189.41 L290.0 188.82 L291.0 188.19 L292.0 187.50 L293.0 186.76 L294.0 185.97 L295.0 185.12 L296.0 184.21 L297.0 183.24 L298.0 182.22 L299.0 181.12 L300.0 179.97 L301.0 178.75 L302.0 177.46 L303.0 176.12 L304.0 174.70 L305.0 173.23 L306.0 171.69 L307.0 170.10 L308.0 168.45 L309.0 166.74 L310.0 164.99 L311.0 163.19 L312.0 161.35 L313.0 159.47 L314.0 157.56 L315.0 155.62 L316.0 153.67 L317.0 151.71 L318.0 149.74 L319.0 147.78 L320.0 145.82 L321.0 143.89 L322.0 141.99 L323.0 140.13 L324.0 138.31 L325.0 136.55 L326.0 134.85 L327.0 133.22 L328.0 131.68 L329.0 130.22 L330.0 128.87 L331.0 127.61 L332.0 126.47 L333.0 125.45 L334.0 124.55 L335.0 123.78 L336.0 123.14 L337.0 122.65 L338.0 122.29 L339.0 122.07 L340.0 122.00 L341.0 122.07 L342.0 122.29 L343.0 122.65 L344.0 123.14 L345.0 123.78 L346.0 124.55 L347.0 125.45 L348.0 126.47 L349.0 127.61 L350.0 128.87 L351.0 130.22 L352.0 131.68 L353.0 133.22 L354.0 134.85 L355.0 136.55 L356.0 138.31 L357.0 140.13 L358.0 141.99 L359.0 143.89 L360.0 145.82 L361.0 147.78 L362.0 149.74 L363.0 151.71 L364.0 153.67 L365.0 155.62 L366.0 157.56 L367.0 159.47 L368.0 161.35 L369.0 163.19 L370.0 164.99 L371.0 166.74 L372.0 168.45 L373.0 170.10 L374.0 171.69 L375.0 173.23 L376.0 174.70 L377.0 176.12 L378.0 177.46 L379.0 178.75 L380.0 179.97 L381.0 181.12 L382.0 182.22 L383.0 183.24 L384.0 184.21 L385.0 185.12 L386.0 185.97 L387.0 186.76 L388.0 187.50 L389.0 188.19 L390.0 188.82 L391.0 189.41 L392.0 189.95 L393.0 190.45 L394.0 190.90 L395.0 191.32 L396.0 191.70 L397.0 192.05 L398.0 192.37 L399.0 192.65 L400.0 192.91 L401.0 193.15 L402.0 193.36 L403.0 193.55 L404.0 193.72 L405.0 193.88 L406.0 194.01 L407.0 194.13 L408.0 194.24 L409.0 194.34 L410.0 194.42 L411.0 194.50 L412.0 194.56 L413.0 194.62 L414.0 194.67 L415.0 194.72 L416.0 194.76 L417.0 194.79 L418.0 194.82 L419.0 194.85 L420.0 194.87 L421.0 194.89 L422.0 194.90 L423.0 194.92 L424.0 194.93 L425.0 194.94 L426.0 194.95 L427.0 194.96 L428.0 194.97 L429.0 194.97 L430.0 194.98" fill="none" stroke="#2d2db4" stroke-width="2.9" stroke-linecap="butt"/>
<path d="M368.5 146.5V197" stroke="#000" stroke-width="1.1"/>
<path d="M368.5 158.5H386" stroke="#000" stroke-width="1.2"/>
<path d="M385 155l8.5 3.5-8.5 3.5z" fill="#000"/>
<!-- logo -->
<path d="M70.6 154.5C78 134 98 117 110 115.5c8-1 13 4 12.8 13.5" fill="none" stroke="#f4b888" stroke-width="2.6" opacity=".45"/><path d="M70.6 154.5C78 134 98 117 110 115.5c8-1 13 4 12.8 13.5" fill="none" stroke="#e8873a" stroke-width="1.4" opacity=".95"/>
<circle cx="122.7" cy="129.8" r="1.3" fill="#e8873a"/>
<path d="M70.6 154.5c1 6 5 12 12 13.5 8 1.5 17-3 23.5-9" fill="none" stroke="#f0b080" stroke-width="1.2" opacity=".8"/>
<circle cx="70.6" cy="154.5" r="2.3" fill="#e86a10"/>
</svg>
<div class="lg" style="left:31px;top:132px;letter-spacing:0.1px">OpenSource</div>
<div class="lg" style="left:64px;top:157.5px">SixSigma</div>
<div class="tm" style="left:139px;top:162px">TM</div>
<div class="zh" style="left:45px;width:46px;top:213px;height:22px">Z</div>
<div class="hh" style="left:91px;width:64px;top:213px;height:22px">0</div>
<div class="hh" style="left:155px;width:64px;top:213px;height:22px">0.01</div>
<div class="hh" style="left:219px;width:64px;top:213px;height:22px">0.02</div>
<div class="hh" style="left:283px;width:64px;top:213px;height:22px">0.03</div>
<div class="hh" style="left:347px;width:64px;top:213px;height:22px">0.04</div>
<div class="hh" style="left:411px;width:64px;top:213px;height:22px">0.05</div>
<div class="hh" style="left:475px;width:64px;top:213px;height:22px">0.06</div>
<div class="hh" style="left:539px;width:64px;top:213px;height:22px">0.07</div>
<div class="hh" style="left:603px;width:64px;top:213px;height:22px">0.08</div>
<div class="hh" style="left:667px;width:64px;top:213px;height:22px">0.09</div>
<div class="zl" style="left:45px;width:46px;top:235px">0.0</div>
<div class="v" style="left:91px;top:235px">0.50000</div>
<div class="v" style="left:155px;top:235px">0.49601</div>
<div class="v" style="left:219px;top:235px">0.49202</div>
<div class="v" style="left:283px;top:235px">0.48803</div>
<div class="v" style="left:347px;top:235px">0.48405</div>
<div class="v" style="left:411px;top:235px">0.48006</div>
<div class="v" style="left:475px;top:235px">0.47608</div>
<div class="v" style="left:539px;top:235px">0.47210</div>
<div class="v" style="left:603px;top:235px">0.46812</div>
<div class="v" style="left:667px;top:235px">0.46414</div>
<div class="zl" style="left:45px;width:46px;top:252px">0.1</div>
<div class="yrow" style="top:253px"></div>
<div class="v" style="left:91px;top:252px">0.46017</div>
<div class="v" style="left:155px;top:252px">0.45620</div>
<div class="v" style="left:219px;top:252px">0.45224</div>
<div class="v" style="left:283px;top:252px">0.44828</div>
<div class="v" style="left:347px;top:252px">0.44433</div>
<div class="v" style="left:411px;top:252px">0.44038</div>
<div class="v" style="left:475px;top:252px">0.43644</div>
<div class="v" style="left:539px;top:252px">0.43251</div>
<div class="v" style="left:603px;top:252px">0.42858</div>
<div class="v" style="left:667px;top:252px">0.42465</div>
<div class="zl" style="left:45px;width:46px;top:269px">0.2</div>
<div class="v" style="left:91px;top:269px">0.42074</div>
<div class="v" style="left:155px;top:269px">0.41683</div>
<div class="v" style="left:219px;top:269px">0.41294</div>
<div class="v" style="left:283px;top:269px">0.40905</div>
<div class="v" style="left:347px;top:269px">0.40517</div>
<div class="v" style="left:411px;top:269px">0.40129</div>
<div class="v" style="left:475px;top:269px">0.39743</div>
<div class="v" style="left:539px;top:269px">0.39358</div>
<div class="v" style="left:603px;top:269px">0.38974</div>
<div class="v" style="left:667px;top:269px">0.38591</div>
<div class="zl" style="left:45px;width:46px;top:286px">0.3</div>
<div class="yrow" style="top:287px"></div>
<div class="v" style="left:91px;top:286px">0.38209</div>
<div class="v" style="left:155px;top:286px">0.37828</div>
<div class="v" style="left:219px;top:286px">0.37448</div>
<div class="v" style="left:283px;top:286px">0.37070</div>
<div class="v" style="left:347px;top:286px">0.36693</div>
<div class="v" style="left:411px;top:286px">0.36317</div>
<div class="v" style="left:475px;top:286px">0.35942</div>
<div class="v" style="left:539px;top:286px">0.35569</div>
<div class="v" style="left:603px;top:286px">0.35197</div>
<div class="v" style="left:667px;top:286px">0.34827</div>
<div class="zl" style="left:45px;width:46px;top:303px">0.4</div>
<div class="v" style="left:91px;top:303px">0.34458</div>
<div class="v" style="left:155px;top:303px">0.34090</div>
<div class="v" style="left:219px;top:303px">0.33724</div>
<div class="v" style="left:283px;top:303px">0.33360</div>
<div class="v" style="left:347px;top:303px">0.32997</div>
<div class="v" style="left:411px;top:303px">0.32636</div>
<div class="v" style="left:475px;top:303px">0.32276</div>
<div class="v" style="left:539px;top:303px">0.31918</div>
<div class="v" style="left:603px;top:303px">0.31561</div>
<div class="v" style="left:667px;top:303px">0.31207</div>
<div class="zl" style="left:45px;width:46px;top:320px">0.5</div>
<div class="yrow" style="top:321px"></div>
<div class="v" style="left:91px;top:320px">0.30854</div>
<div class="v" style="left:155px;top:320px">0.30503</div>
<div class="v" style="left:219px;top:320px">0.30153</div>
<div class="v" style="left:283px;top:320px">0.29806</div>
<div class="v" style="left:347px;top:320px">0.29460</div>
<div class="v" style="left:411px;top:320px">0.29116</div>
<div class="v" style="left:475px;top:320px">0.28774</div>
<div class="v" style="left:539px;top:320px">0.28434</div>
<div class="v" style="left:603px;top:320px">0.28096</div>
<div class="v" style="left:667px;top:320px">0.27760</div>
<div class="zl" style="left:45px;width:46px;top:337px">0.6</div>
<div class="v" style="left:91px;top:337px">0.27425</div>
<div class="v" style="left:155px;top:337px">0.27093</div>
<div class="v" style="left:219px;top:337px">0.26763</div>
<div class="v" style="left:283px;top:337px">0.26435</div>
<div class="v" style="left:347px;top:337px">0.26109</div>
<div class="v" style="left:411px;top:337px">0.25785</div>
<div class="v" style="left:475px;top:337px">0.25463</div>
<div class="v" style="left:539px;top:337px">0.25143</div>
<div class="v" style="left:603px;top:337px">0.24825</div>
<div class="v" style="left:667px;top:337px">0.24510</div>
<div class="zl" style="left:45px;width:46px;top:354px">0.7</div>
<div class="yrow" style="top:355px"></div>
<div class="v" style="left:91px;top:354px">0.24196</div>
<div class="v" style="left:155px;top:354px">0.23885</div>
<div class="v" style="left:219px;top:354px">0.23576</div>
<div class="v" style="left:283px;top:354px">0.23270</div>
<div class="v" style="left:347px;top:354px">0.22965</div>
<div class="v" style="left:411px;top:354px">0.22663</div>
<div class="v" style="left:475px;top:354px">0.22363</div>
<div class="v" style="left:539px;top:354px">0.22065</div>
<div class="v" style="left:603px;top:354px">0.21770</div>
<div class="v" style="left:667px;top:354px">0.21476</div>
<div class="zl" style="left:45px;width:46px;top:371px">0.8</div>
<div class="v" style="left:91px;top:371px">0.21186</div>
<div class="v" style="left:155px;top:371px">0.20897</div>
<div class="v" style="left:219px;top:371px">0.20611</div>
<div class="v" style="left:283px;top:371px">0.20327</div>
<div class="v" style="left:347px;top:371px">0.20045</div>
<div class="v" style="left:411px;top:371px">0.19766</div>
<div class="v" style="left:475px;top:371px">0.19489</div>
<div class="v" style="left:539px;top:371px">0.19215</div>
<div class="v" style="left:603px;top:371px">0.18943</div>
<div class="v" style="left:667px;top:371px">0.18673</div>
<div class="zl" style="left:45px;width:46px;top:388px">0.9</div>
<div class="yrow" style="top:389px"></div>
<div class="v" style="left:91px;top:388px">0.18406</div>
<div class="v" style="left:155px;top:388px">0.18141</div>
<div class="v" style="left:219px;top:388px">0.17879</div>
<div class="v" style="left:283px;top:388px">0.17619</div>
<div class="v" style="left:347px;top:388px">0.17361</div>
<div class="v" style="left:411px;top:388px">0.17106</div>
<div class="v" style="left:475px;top:388px">0.16853</div>
<div class="v" style="left:539px;top:388px">0.16602</div>
<div class="v" style="left:603px;top:388px">0.16354</div>
<div class="v" style="left:667px;top:388px">0.16109</div>
<div class="zl" style="left:45px;width:46px;top:405px">1.0</div>
<div class="v" style="left:91px;top:405px">0.15866</div>
<div class="v" style="left:155px;top:405px">0.15625</div>
<div class="v" style="left:219px;top:405px">0.15386</div>
<div class="v" style="left:283px;top:405px">0.15151</div>
<div class="v" style="left:347px;top:405px">0.14917</div>
<div class="v" style="left:411px;top:405px">0.14686</div>
<div class="v" style="left:475px;top:405px">0.14457</div>
<div class="v" style="left:539px;top:405px">0.14231</div>
<div class="v" style="left:603px;top:405px">0.14007</div>
<div class="v" style="left:667px;top:405px">0.13786</div>
<div class="zl" style="left:45px;width:46px;top:422px">1.1</div>
<div class="yrow" style="top:423px"></div>
<div class="v" style="left:91px;top:422px">0.13567</div>
<div class="v" style="left:155px;top:422px">0.13350</div>
<div class="v" style="left:219px;top:422px">0.13136</div>
<div class="v" style="left:283px;top:422px">0.12924</div>
<div class="v" style="left:347px;top:422px">0.12714</div>
<div class="v" style="left:411px;top:422px">0.12507</div>
<div class="v" style="left:475px;top:422px">0.12302</div>
<div class="v" style="left:539px;top:422px">0.12100</div>
<div class="v" style="left:603px;top:422px">0.11900</div>
<div class="v" style="left:667px;top:422px">0.11702</div>
<div class="zl" style="left:45px;width:46px;top:439px">1.2</div>
<div class="v" style="left:91px;top:439px">0.11507</div>
<div class="v" style="left:155px;top:439px">0.11314</div>
<div class="v" style="left:219px;top:439px">0.11123</div>
<div class="v" style="left:283px;top:439px">0.10935</div>
<div class="v" style="left:347px;top:439px">0.10749</div>
<div class="v" style="left:411px;top:439px">0.10565</div>
<div class="v" style="left:475px;top:439px">0.10383</div>
<div class="v" style="left:539px;top:439px">0.10204</div>
<div class="v" style="left:603px;top:439px">0.10027</div>
<div class="v" style="left:667px;top:439px">0.09853</div>
<div class="zl" style="left:45px;width:46px;top:456px">1.3</div>
<div class="yrow" style="top:457px"></div>
<div class="v" style="left:91px;top:456px">0.09680</div>
<div class="v" style="left:155px;top:456px">0.09510</div>
<div class="v" style="left:219px;top:456px">0.09342</div>
<div class="v" style="left:283px;top:456px">0.09176</div>
<div class="v" style="left:347px;top:456px">0.09012</div>
<div class="v" style="left:411px;top:456px">0.08851</div>
<div class="v" style="left:475px;top:456px">0.08691</div>
<div class="v" style="left:539px;top:456px">0.08534</div>
<div class="v" style="left:603px;top:456px">0.08379</div>
<div class="v" style="left:667px;top:456px">0.08226</div>
<div class="zl" style="left:45px;width:46px;top:473px">1.4</div>
<div class="v" style="left:91px;top:473px">0.08076</div>
<div class="v" style="left:155px;top:473px">0.07927</div>
<div class="v" style="left:219px;top:473px">0.07780</div>
<div class="v" style="left:283px;top:473px">0.07636</div>
<div class="v" style="left:347px;top:473px">0.07493</div>
<div class="v" style="left:411px;top:473px">0.07353</div>
<div class="v" style="left:475px;top:473px">0.07215</div>
<div class="v" style="left:539px;top:473px">0.07078</div>
<div class="v" style="left:603px;top:473px">0.06944</div>
<div class="v" style="left:667px;top:473px">0.06811</div>
<div class="zl" style="left:45px;width:46px;top:490px">1.5</div>
<div class="yrow" style="top:491px"></div>
<div class="v" style="left:91px;top:490px">0.06681</div>
<div class="v" style="left:155px;top:490px">0.06552</div>
<div class="v" style="left:219px;top:490px">0.06426</div>
<div class="v" style="left:283px;top:490px">0.06301</div>
<div class="v" style="left:347px;top:490px">0.06178</div>
<div class="v" style="left:411px;top:490px">0.06057</div>
<div class="v" style="left:475px;top:490px">0.05938</div>
<div class="v" style="left:539px;top:490px">0.05821</div>
<div class="v" style="left:603px;top:490px">0.05705</div>
<div class="v" style="left:667px;top:490px">0.05592</div>
<div class="zl" style="left:45px;width:46px;top:507px">1.6</div>
<div class="v" style="left:91px;top:507px">0.05480</div>
<div class="v" style="left:155px;top:507px">0.05370</div>
<div class="v" style="left:219px;top:507px">0.05262</div>
<div class="v" style="left:283px;top:507px">0.05155</div>
<div class="v" style="left:347px;top:507px">0.05050</div>
<div class="v" style="left:411px;top:507px">0.04947</div>
<div class="v" style="left:475px;top:507px">0.04846</div>
<div class="v" style="left:539px;top:507px">0.04746</div>
<div class="v" style="left:603px;top:507px">0.04648</div>
<div class="v" style="left:667px;top:507px">0.04551</div>
<div class="zl" style="left:45px;width:46px;top:524px">1.7</div>
<div class="yrow" style="top:525px"></div>
<div class="v" style="left:91px;top:524px">0.04457</div>
<div class="v" style="left:155px;top:524px">0.04363</div>
<div class="v" style="left:219px;top:524px">0.04272</div>
<div class="v" style="left:283px;top:524px">0.04182</div>
<div class="v" style="left:347px;top:524px">0.04093</div>
<div class="v" style="left:411px;top:524px">0.04006</div>
<div class="v" style="left:475px;top:524px">0.03920</div>
<div class="v" style="left:539px;top:524px">0.03836</div>
<div class="v" style="left:603px;top:524px">0.03754</div>
<div class="v" style="left:667px;top:524px">0.03673</div>
<div class="zl" style="left:45px;width:46px;top:541px">1.8</div>
<div class="v" style="left:91px;top:541px">0.03593</div>
<div class="v" style="left:155px;top:541px">0.03515</div>
<div class="v" style="left:219px;top:541px">0.03438</div>
<div class="v" style="left:283px;top:541px">0.03362</div>
<div class="v" style="left:347px;top:541px">0.03288</div>
<div class="v" style="left:411px;top:541px">0.03216</div>
<div class="v" style="left:475px;top:541px">0.03144</div>
<div class="v" style="left:539px;top:541px">0.03074</div>
<div class="v" style="left:603px;top:541px">0.03005</div>
<div class="v" style="left:667px;top:541px">0.02938</div>
<div class="zl" style="left:45px;width:46px;top:558px">1.9</div>
<div class="yrow" style="top:559px"></div>
<div class="v" style="left:91px;top:558px">0.02872</div>
<div class="v" style="left:155px;top:558px">0.02807</div>
<div class="v" style="left:219px;top:558px">0.02743</div>
<div class="v" style="left:283px;top:558px">0.02680</div>
<div class="v" style="left:347px;top:558px">0.02619</div>
<div class="v" style="left:411px;top:558px">0.02559</div>
<div class="v" style="left:475px;top:558px">0.02500</div>
<div class="v" style="left:539px;top:558px">0.02442</div>
<div class="v" style="left:603px;top:558px">0.02385</div>
<div class="v" style="left:667px;top:558px">0.02330</div>
<div class="zl" style="left:45px;width:46px;top:575px">2.0</div>
<div class="v" style="left:91px;top:575px">0.02275</div>
<div class="v" style="left:155px;top:575px">0.02222</div>
<div class="v" style="left:219px;top:575px">0.02169</div>
<div class="v" style="left:283px;top:575px">0.02118</div>
<div class="v" style="left:347px;top:575px">0.02068</div>
<div class="v" style="left:411px;top:575px">0.02018</div>
<div class="v" style="left:475px;top:575px">0.01970</div>
<div class="v" style="left:539px;top:575px">0.01923</div>
<div class="v" style="left:603px;top:575px">0.01876</div>
<div class="v" style="left:667px;top:575px">0.01831</div>
<div class="zl" style="left:45px;width:46px;top:592px">2.1</div>
<div class="yrow" style="top:593px"></div>
<div class="v" style="left:91px;top:592px">0.01786</div>
<div class="v" style="left:155px;top:592px">0.01743</div>
<div class="v" style="left:219px;top:592px">0.01700</div>
<div class="v" style="left:283px;top:592px">0.01659</div>
<div class="v" style="left:347px;top:592px">0.01618</div>
<div class="v" style="left:411px;top:592px">0.01578</div>
<div class="v" style="left:475px;top:592px">0.01539</div>
<div class="v" style="left:539px;top:592px">0.01500</div>
<div class="v" style="left:603px;top:592px">0.01463</div>
<div class="v" style="left:667px;top:592px">0.01426</div>
<div class="zl" style="left:45px;width:46px;top:609px">2.2</div>
<div class="v" style="left:91px;top:609px">0.01390</div>
<div class="v" style="left:155px;top:609px">0.01355</div>
<div class="v" style="left:219px;top:609px">0.01321</div>
<div class="v" style="left:283px;top:609px">0.01287</div>
<div class="v" style="left:347px;top:609px">0.01255</div>
<div class="v" style="left:411px;top:609px">0.01222</div>
<div class="v" style="left:475px;top:609px">0.01191</div>
<div class="v" style="left:539px;top:609px">0.01160</div>
<div class="v" style="left:603px;top:609px">0.01130</div>
<div class="v" style="left:667px;top:609px">0.01101</div>
<div class="zl" style="left:45px;width:46px;top:626px">2.3</div>
<div class="yrow" style="top:627px"></div>
<div class="v" style="left:91px;top:626px">0.01072</div>
<div class="v" style="left:155px;top:626px">0.01044</div>
<div class="v" style="left:219px;top:626px">0.01017</div>
<div class="v" style="left:283px;top:626px">0.00990</div>
<div class="v" style="left:347px;top:626px">0.00964</div>
<div class="v" style="left:411px;top:626px">0.00939</div>
<div class="v" style="left:475px;top:626px">0.00914</div>
<div class="v" style="left:539px;top:626px">0.00889</div>
<div class="v" style="left:603px;top:626px">0.00866</div>
<div class="v" style="left:667px;top:626px">0.00842</div>
<div class="hl" style="top:252px"></div>
<div class="hl" style="top:269px"></div>
<div class="hl" style="top:286px"></div>
<div class="hl" style="top:303px"></div>
<div class="hl" style="top:320px"></div>
<div class="hl" style="top:337px"></div>
<div class="hl" style="top:354px"></div>
<div class="hl" style="top:371px"></div>
<div class="hl" style="top:388px"></div>
<div class="hl" style="top:405px"></div>
<div class="hl" style="top:422px"></div>
<div class="hl" style="top:439px"></div>
<div class="hl" style="top:456px"></div>
<div class="hl" style="top:473px"></div>
<div class="hl" style="top:490px"></div>
<div class="hl" style="top:507px"></div>
<div class="hl" style="top:524px"></div>
<div class="hl" style="top:541px"></div>
<div class="hl" style="top:558px"></div>
<div class="hl" style="top:575px"></div>
<div class="hl" style="top:592px"></div>
<div class="hl" style="top:609px"></div>
<div class="hl" style="top:626px"></div>
<div class="vl" style="left:155px"></div>
<div class="vl" style="left:219px"></div>
<div class="vl" style="left:283px"></div>
<div class="vl" style="left:347px"></div>
<div class="vl" style="left:411px"></div>
<div class="vl" style="left:475px"></div>
<div class="vl" style="left:539px"></div>
<div class="vl" style="left:603px"></div>
<div class="vl" style="left:667px"></div>
<div class="tb-top"></div><div class="tb-left"></div><div class="tb-right"></div>
<div class="selbox"><div class="s1"></div></div><div class="selh"></div>
</div>
</body></html>
